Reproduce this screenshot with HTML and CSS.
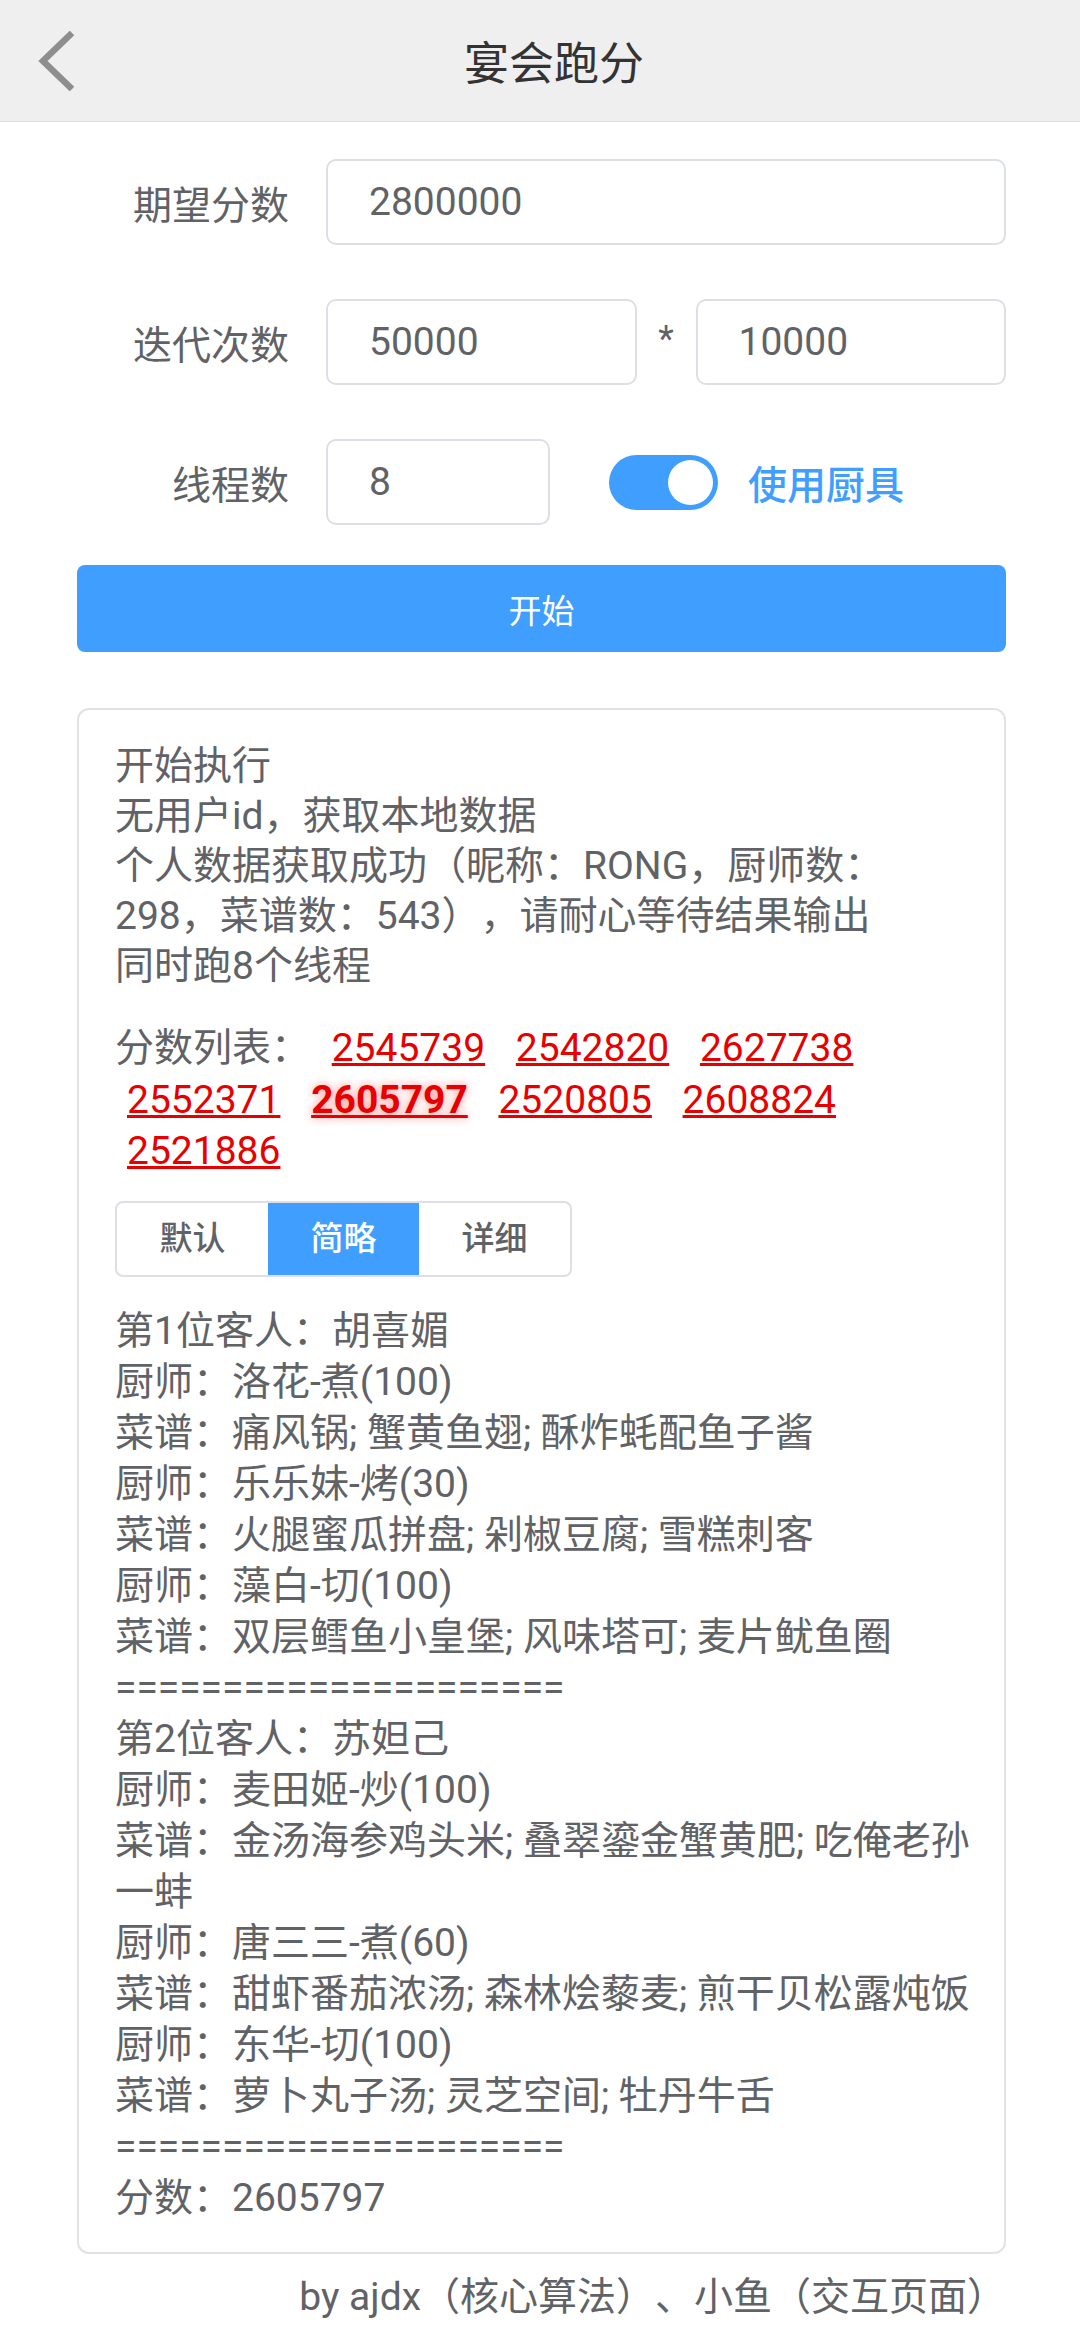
FILE: index.html
```html
<!DOCTYPE html>
<html lang="zh-CN">
<head>
  <meta charset="UTF-8" />
  <meta name="viewport" content="width=device-width, initial-scale=1" />
  <title>宴会跑分</title>
  <link rel="stylesheet" href="styles.css">
</head>
<body>
  <header class="nav-bar">
    <span class="nav-back">
      <svg width="40" height="60" viewBox="0 0 40 60">
        <polyline points="36,2 7,30 36,58" fill="none" stroke="#8e8e8e" stroke-width="6.5" />
      </svg>
    </span>
    <h1 class="nav-title">宴会跑分</h1>
    <span></span>
  </header>

  <main class="page">
    <div class="form">
      <div class="form-row">
        <label for="targetScore">期望分数</label>
        <div class="field">
          <input class="input" id="targetScore" type="text" value="2800000" />
        </div>
      </div>

      <div class="form-row">
        <label for="iterA">迭代次数</label>
        <div class="field field-split">
          <input class="input" id="iterA" type="text" value="50000" />
          <span class="times">*</span>
          <input class="input" id="iterB" type="text" value="10000" />
        </div>
      </div>

      <div class="form-row">
        <label for="threads">线程数</label>
        <div class="field field-inline">
          <input class="input input-short" id="threads" type="text" value="8" />
          <span class="switch is-on"><span class="switch-knob"></span></span>
          <span class="switch-label">使用厨具</span>
        </div>
      </div>
    </div>

    <button class="btn-start" id="startBtn">开始</button>

    <section class="log">
      <div class="log-lines">
        <div>开始执行</div>
        <div>无用户id，获取本地数据</div>
        <div>个人数据获取成功（昵称：RONG，厨师数：298，菜谱数：543），请耐心等待结果输出</div>
        <div>同时跑8个线程</div>
      </div>

      <div class="score-list">分数列表： <a class="score">2545739</a> <a class="score">2542820</a> <a class="score">2627738</a> <a class="score">2552371</a> <a class="score best">2605797</a> <a class="score">2520805</a> <a class="score">2608824</a> <a class="score">2521886</a></div>

      <div class="mode-group">
        <span class="mode-btn">默认</span>
        <span class="mode-btn active">简略</span>
        <span class="mode-btn">详细</span>
      </div>

      <div class="result">
        <div>第1位客人：胡喜媚</div>
        <div>厨师：洛花-煮(100)</div>
        <div>菜谱：痛风锅; 蟹黄鱼翅; 酥炸蚝配鱼子酱</div>
        <div>厨师：乐乐妹-烤(30)</div>
        <div>菜谱：火腿蜜瓜拼盘; 剁椒豆腐; 雪糕刺客</div>
        <div>厨师：藻白-切(100)</div>
        <div>菜谱：双层鳕鱼小皇堡; 风味塔可; 麦片鱿鱼圈</div>
        <div>=====================</div>
        <div>第2位客人：苏妲己</div>
        <div>厨师：麦田姬-炒(100)</div>
        <div>菜谱：金汤海参鸡头米; 叠翠鎏金蟹黄肥; 吃俺老孙一蚌</div>
        <div>厨师：唐三三-煮(60)</div>
        <div>菜谱：甜虾番茄浓汤; 森林烩藜麦; 煎干贝松露炖饭</div>
        <div>厨师：东华-切(100)</div>
        <div>菜谱：萝卜丸子汤; 灵芝空间; 牡丹牛舌</div>
        <div>=====================</div>
        <div>分数：2605797</div>
      </div>
    </section>

    <p class="credits">by ajdx（核心算法）、小鱼（交互页面）</p>
  </main>
</body>
</html>
```

FILE: styles.css
```css
body {
  margin: 0;
  font-family: Roboto, "Noto Sans CJK SC", sans-serif;
  color: #606266;
  background: #fff;
  text-spacing-trim: space-all;
}

.nav-bar {
  display: grid;
  grid-template-columns: 100px 1fr 72px;
  align-items: center;
  height: 121px;
  background: #efefef;
  border-bottom: 1px solid #dedede;
}

.nav-back {
  display: flex;
  padding-left: 36px;
}

.nav-title {
  margin: 0;
  text-align: center;
  font-size: 45px;
  font-weight: normal;
  color: #333;
}

.page {
  padding: 37px 74px 0 77px;
}

.form-row {
  display: grid;
  grid-template-columns: 249px 1fr;
  align-items: center;
  height: 86px;
  margin-bottom: 54px;
}

.form-row:last-child {
  margin-bottom: 0;
}

.form-row label {
  text-align: right;
  padding-right: 37px;
  font-size: 39px;
  color: #606266;
}

.field-split {
  display: grid;
  grid-template-columns: 1fr 59px 1fr;
  align-items: center;
}

.field-inline {
  display: flex;
  align-items: center;
}

.times {
  text-align: center;
  font-size: 36px;
  line-height: 1;
  margin-top: -6px;
}

.input {
  box-sizing: border-box;
  width: 100%;
  height: 86px;
  padding: 0 41px;
  border: 2px solid #dcdfe6;
  border-radius: 10px;
  font-family: Roboto, "Noto Sans CJK SC", sans-serif;
  font-size: 39px;
  color: #606266;
  background: #fff;
  outline: none;
}

.input-short {
  width: 224px;
}

.switch {
  display: inline-flex;
  justify-content: flex-end;
  align-items: center;
  box-sizing: border-box;
  width: 109px;
  height: 55px;
  margin-left: 59px;
  padding: 0 5px;
  border-radius: 28px;
  background: #dcdfe6;
}

.switch.is-on {
  background: #409eff;
}

.switch-knob {
  width: 45px;
  height: 45px;
  border-radius: 50%;
  background: #fff;
}

.switch-label {
  margin-left: 30px;
  font-size: 39px;
  font-weight: 500;
  color: #409eff;
}

.btn-start {
  display: block;
  width: 100%;
  height: 87px;
  margin-top: 40px;
  border: none;
  border-radius: 8px;
  background: #409eff;
  color: #fff;
  font-family: Roboto, "Noto Sans CJK SC", sans-serif;
  font-size: 33px;
}

.log {
  margin-top: 56px;
  border: 2px solid #e2e2e2;
  border-radius: 12px;
  padding: 31px 27px 28px 36px;
  font-size: 39px;
}

.log-lines {
  line-height: 50px;
}

.score-list {
  margin-top: 32px;
  line-height: 51.5px;
}

.score {
  margin: 0 9px 0 12px;
  color: #e60000;
  text-decoration: underline;
}

.score.best {
  font-weight: bold;
  text-shadow: 0 0 8px rgba(255, 0, 0, 0.45);
}

.mode-group {
  display: inline-flex;
  margin-top: 23px;
  border: 2px solid #dcdfe6;
  border-radius: 8px;
  overflow: hidden;
}

.mode-btn {
  width: 151px;
  height: 72px;
  line-height: 72px;
  text-align: center;
  font-size: 33px;
  font-weight: 500;
  color: #606266;
}

.mode-btn.active {
  background: #409eff;
  color: #fff;
}

.result {
  margin-top: 29px;
  line-height: 51px;
}

.credits {
  margin: 18px 0 0;
  text-align: right;
  font-size: 39px;
  line-height: 50px;
}
```
